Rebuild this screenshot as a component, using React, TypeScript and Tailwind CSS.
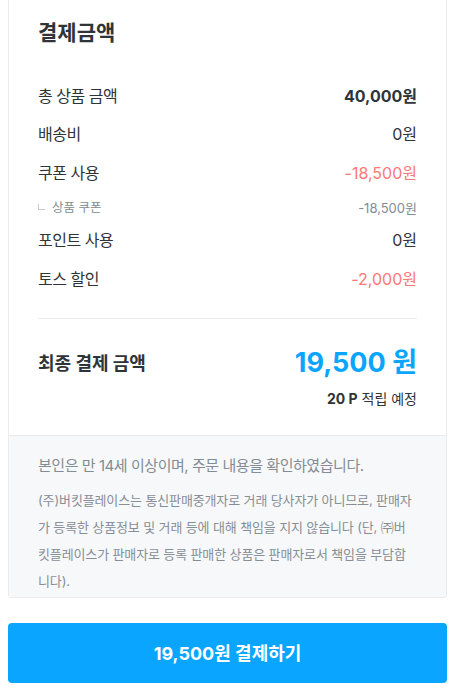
import React from 'react';

type Row = {
  label: string;
  value: string;
  tone?: 'bold' | 'red' | 'normal';
  sub?: boolean;
};

const rows: Row[] = [
  { label: '총 상품 금액', value: '40,000원', tone: 'bold' },
  { label: '배송비', value: '0원' },
  { label: '쿠폰 사용', value: '-18,500원', tone: 'red' },
  { label: '상품 쿠폰', value: '-18,500원', sub: true },
  { label: '포인트 사용', value: '0원' },
  { label: '토스 할인', value: '-2,000원', tone: 'red' },
];

// row heights taken from the design, the sub row is tighter
const rowHeight = ['h-[38px]', 'h-[38px]', 'h-[39px]', 'h-[33px]', 'h-[30px]', 'h-[48px]'];

const PriceRow: React.FC<{ row: Row; h: string }> = ({ row, h }) => {
  if (row.sub) {
    return (
      <div className={`${h} flex items-center justify-between text-[#828c94]`}>
        <div className="flex items-center text-[12.5px]">
          <span className="w-[7px] h-[6px] border-l border-b border-[#c2c8cc] mr-[7px] -mt-[4px]" />
          <span>{row.label}</span>
        </div>
        <span className="text-[13px]">{row.value}</span>
      </div>
    );
  }
  const valueClass =
    row.tone === 'bold'
      ? 'font-bold text-[#2f3438]'
      : row.tone === 'red'
        ? 'text-[#ff7777]'
        : 'text-[#2f3438]';
  return (
    <div className={`${h} flex items-center justify-between text-[16px]`}>
      <span className="text-[#2f3438] tracking-[-0.03em]">{row.label}</span>
      <span className={valueClass}>{row.value}</span>
    </div>
  );
};

export default function App() {
  return (
    <div
      className="w-[464px] bg-white pl-[8px] pr-[17px] pb-[10px]"
      style={{ fontFamily: "Inter, 'Noto Sans CJK KR', sans-serif" }}
    >
      <div className="border-x border-b border-[#eaebef] rounded-b-[4px] overflow-hidden">
        <div className="px-[29px] pt-[17px]">
          <h2 className="text-[21px] leading-[32px] font-bold text-[#2f3438]">결제금액</h2>
          <div className="mt-[28px]">
            {rows.map((r, i) => (
              <PriceRow key={r.label} row={r} h={rowHeight[i]} />
            ))}
          </div>
          <div className="mt-[15px] border-t border-[#eaebef]" />
          <div className="pt-[26px] pb-[26px]">
            <div className="flex items-center justify-between">
              <span className="text-[18px] font-bold text-[#2f3438]">최종 결제 금액</span>
              <span className="text-[27px] leading-[36px] font-bold text-[#0aa5ff]">19,500 원</span>
            </div>
            <div className="mt-[7px] text-right text-[14px] text-[#2f3438]">
              <span className="font-bold">20 P</span> 적립 예정
            </div>
          </div>
        </div>
        <div className="bg-[#f7f8fa] border-t border-[#eaebef] px-[29px] pt-[18px] pb-[2px]">
          <p className="text-[15px] leading-[24px] text-[#828c94] tracking-[-0.03em]">
            본인은 만 14세 이상이며, 주문 내용을 확인하였습니다.
          </p>
          <p className="mt-[9px] text-[13px] leading-[27px] text-[#868e96] tracking-[-0.01em]">
            (주)버킷플레이스는 통신판매중개자로 거래 당사자가 아니므로, 판매자가 등록한 상품정보 및 거래 등에 대해 책임을 지지 않습니다 (단, ㈜버킷플레이스가 판매자로 등록 판매한 상품은 판매자로서 책임을 부담합니다).
          </p>
        </div>
      </div>
      <button className="mt-[25px] w-full h-[60px] rounded-[4px] bg-[#0aa5ff] text-white text-[18px] font-bold">
        19,500원 결제하기
      </button>
    </div>
  );
}
